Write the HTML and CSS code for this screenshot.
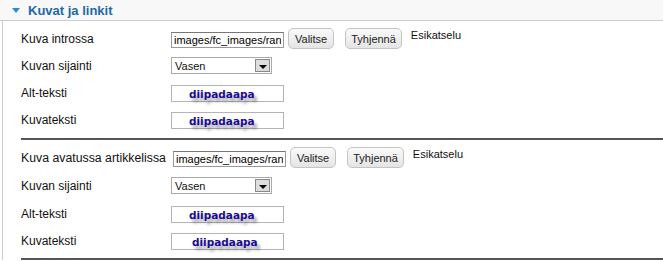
FILE: index.html
```html
<!DOCTYPE html>
<html lang="fi">
<head>
    <meta charset="UTF-8">
    <title>Kuvat ja linkit</title>
    <link rel="stylesheet" href="styles.css">
</head>
<body>
    <div class="panel">
        <div class="panel-head">
            <span class="toggle"></span>
            <h3>Kuvat ja linkit</h3>
        </div>
        <div class="panel-body">
            <div class="group">
                <div class="row">
                    <label>Kuva introssa</label>
                    <input class="path" type="text" value="images/fc_images/random.jpg">
                    <button class="btn first">Valitse</button>
                    <button class="btn">Tyhjennä</button>
                    <span class="preview">Esikatselu</span>
                </div>
                <div class="row">
                    <label>Kuvan sijainti</label>
                    <div class="select"><span>Vasen</span><span class="arrow"></span></div>
                </div>
                <div class="row">
                    <label>Alt-teksti</label>
                    <div class="textbox"><span class="fancy">diipadaapa</span></div>
                </div>
                <div class="row">
                    <label>Kuvateksti</label>
                    <div class="textbox"><span class="fancy">diipadaapa</span></div>
                </div>
            </div>
            <div class="group second">
                <div class="row">
                    <label class="long">Kuva avatussa artikkelissa</label>
                    <input class="path" type="text" value="images/fc_images/random.jpg">
                    <button class="btn first">Valitse</button>
                    <button class="btn">Tyhjennä</button>
                    <span class="preview">Esikatselu</span>
                </div>
                <div class="row tall">
                    <label>Kuvan sijainti</label>
                    <div class="select"><span>Vasen</span><span class="arrow"></span></div>
                </div>
                <div class="row">
                    <label>Alt-teksti</label>
                    <div class="textbox"><span class="fancy">diipadaapa</span></div>
                </div>
                <div class="row">
                    <label>Kuvateksti</label>
                    <div class="textbox"><span class="fancy shifted">diipadaapa</span></div>
                </div>
            </div>
        </div>
    </div>
</body>
</html>
```

FILE: styles.css
```css
body {
    margin: 0;
    font-family: "Liberation Sans", Arial, sans-serif;
    background-color: #fff;
    color: #111;
}
.panel-head {
    height: 20px;
    background-color: #f8f8f8;
    border-bottom: 1px solid #ccc;
    display: flex;
    align-items: center;
    padding-left: 12px;
}
.toggle {
    width: 0;
    height: 0;
    border-left: 4px solid transparent;
    border-right: 4px solid transparent;
    border-top: 5px solid #2b8ccc;
    margin-right: 8px;
    margin-top: 1px;
}
.panel-head h3 {
    margin: 0;
    font-size: 13px;
    font-weight: bold;
    color: #1c6aa5;
}
.panel-body {
    margin-left: 2px;
    border-left: 1px solid #ccc;
    padding-left: 18px;
    padding-top: 4px;
}
.group {
    border-bottom: 2px solid #555;
    padding-bottom: 5px;
}
.group.second {
    padding-top: 4px;
    padding-bottom: 4px;
}
.row {
    display: flex;
    align-items: center;
    height: 27px;
}
.row.tall {
    height: 29px;
}
.row label {
    width: 150px;
    font-size: 12px;
    flex-shrink: 0;
    white-space: nowrap;
}
.row label.long {
    width: 152px;
    font-size: 12.3px;
}
.path {
    width: 113px;
    height: 16px;
    box-sizing: border-box;
    border: 1px solid #999;
    border-top-color: #777;
    padding: 0 2px;
    font-family: "Liberation Sans", Arial, sans-serif;
    font-size: 11px;
    color: #000;
    margin: 0;
    margin-top: 2px;
    outline: none;
}
.btn {
    height: 21px;
    padding: 0 5px;
    font-family: "Liberation Sans", Arial, sans-serif;
    font-size: 11px;
    color: #222;
    border: 1px solid #c4c4c4;
    border-radius: 5px;
    background: linear-gradient(#fafafa, #e4e4e4);
    margin-left: 11px;
}
.btn.first {
    margin-left: 4px;
    padding: 0 6px;
}
.preview {
    align-self: flex-start;
    margin-top: 4px;
    margin-left: 9px;
    font-size: 11px;
}
.select {
    width: 101px;
    height: 17px;
    box-sizing: border-box;
    border: 1px solid #aaa;
    display: flex;
    align-items: center;
    justify-content: space-between;
    font-size: 11px;
    padding-left: 3px;
    padding-right: 1px;
}
.arrow {
    width: 15px;
    height: 13px;
    box-sizing: border-box;
    background-color: #ddd;
    border: 1px solid #888;
    display: flex;
    align-items: center;
    justify-content: center;
}
.arrow::after {
    content: "";
    border-left: 4px solid transparent;
    border-right: 4px solid transparent;
    border-top: 4px solid #000;
    margin-top: 2px;
}
.textbox {
    width: 113px;
    height: 17px;
    box-sizing: border-box;
    border: 1px solid #b4b4b4;
    display: flex;
    align-items: center;
    margin-top: 2px;
}
.fancy {
    margin-left: 17px;
    font-family: "DejaVu Sans", Verdana, sans-serif;
    font-weight: bold;
    font-size: 10.5px;
    color: #1a0b96;
    text-shadow: 3px 4px 3px rgba(0, 0, 0, 0.35);
}
.fancy.shifted {
    margin-left: 20px;
}
```
